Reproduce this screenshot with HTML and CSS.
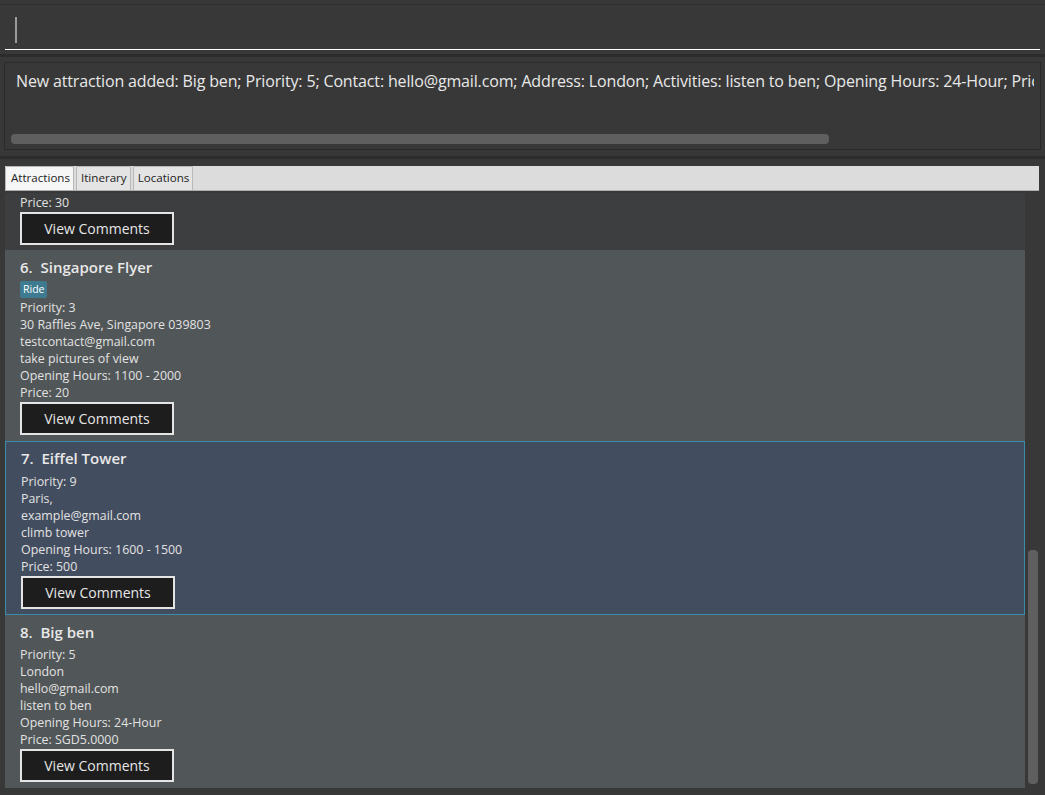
FILE: index.html
```html
<!DOCTYPE html>
<html>
<head>
<meta charset="utf-8">
<link rel="stylesheet" href="styles.css">
</head>
<body>
<div class="app">
  <div class="command-pane">
    <div class="command-box">
      <span class="caret"></span>
    </div>
  </div>
  <div class="result-pane">
    <div class="result-box">
      <div class="result-text">New attraction added: Big ben; Priority: 5; Contact: hello@gmail.com; Address: London; Activities: listen to ben; Opening Hours: 24-Hour; Price: SGD5.0000</div>
      <div class="hscroll"><div class="hthumb"></div></div>
    </div>
  </div>
  <div class="tab-pane">
    <div class="tab-header">
      <div class="tab active">Attractions</div>
      <div class="tab">Itinerary</div>
      <div class="tab">Locations</div>
    </div>
    <div class="list-wrap">
      <div class="list">
        <div class="card even partial">
          <div class="line">Price: 30</div>
          <button class="btn">View Comments</button>
        </div>
        <div class="card odd">
          <div class="title">6.&nbsp; Singapore Flyer</div>
          <div class="tags"><span class="tag">Ride</span></div>
          <div class="line">Priority: 3</div>
          <div class="line">30 Raffles Ave, Singapore 039803</div>
          <div class="line">testcontact@gmail.com</div>
          <div class="line">take pictures of view</div>
          <div class="line">Opening Hours: 1100 - 2000</div>
          <div class="line">Price: 20</div>
          <button class="btn">View Comments</button>
        </div>
        <div class="card selected">
          <div class="title">7.&nbsp; Eiffel Tower</div>
          <div class="line">Priority: 9</div>
          <div class="line">Paris,</div>
          <div class="line">example@gmail.com</div>
          <div class="line">climb tower</div>
          <div class="line">Opening Hours: 1600 - 1500</div>
          <div class="line">Price: 500</div>
          <button class="btn">View Comments</button>
        </div>
        <div class="card odd">
          <div class="title">8.&nbsp; Big ben</div>
          <div class="line">Priority: 5</div>
          <div class="line">London</div>
          <div class="line">hello@gmail.com</div>
          <div class="line">listen to ben</div>
          <div class="line">Opening Hours: 24-Hour</div>
          <div class="line">Price: SGD5.0000</div>
          <button class="btn">View Comments</button>
        </div>
      </div>
      <div class="vscroll"><div class="vthumb"></div></div>
    </div>
  </div>
</div>
</body>
</html>
```

FILE: styles.css
```css
* { box-sizing: border-box; }
html, body {
  margin: 0;
  padding: 0;
  background: #383838;
  width: 1045px;
  height: 795px;
  overflow: hidden;
  font-family: "Open Sans", "Noto Sans", sans-serif;
  color: #e6e6e6;
}
.app {
  display: flex;
  flex-direction: column;
  height: 795px;
}
.command-pane {
  padding-top: 4px;
}
.command-box {
  border-top: 1px solid #2e2e2e;
  height: 46px;
  padding: 12px 0 0 15px;
  position: relative;
}
.command-box::after {
  content: "";
  position: absolute;
  left: 5px;
  right: 5px;
  top: 44px;
  height: 1px;
  background: #ffffff;
}
.caret {
  display: block;
  width: 2px;
  height: 26px;
  background: #9a9a9a;
}
.result-pane {
  margin-top: 4px;
  border-top: 3px solid #2c2c2c;
  padding: 5px 4px 6px 4px;
}
.result-box {
  height: 88px;
  border: 1px solid #2a2a2a;
  padding: 6px 6px 0 11px;
  overflow: hidden;
}
.result-text {
  white-space: nowrap;
  font-size: 16px;
  letter-spacing: -0.15px;
  line-height: 24px;
  color: #e8e8e8;
  overflow: hidden;
}
.hscroll {
  margin-top: 41px;
  margin-left: -5px;
  height: 10px;
}
.hthumb {
  width: 818px;
  height: 10px;
  border-radius: 4px;
  background: #5f5f5f;
}
.tab-pane {
  border-top: 3px solid #2c2c2c;
  padding: 7px 6px 7px 5px;
  flex: 1;
  display: flex;
  flex-direction: column;
  min-height: 0;
}
.tab-header {
  height: 25px;
  background: #dcdcdc;
  border-bottom: 1px solid #b0b0b0;
  display: flex;
  gap: 2px;
  padding-top: 1px;
  align-items: flex-end;
}
.tab {
  font-size: 11.6px;
  color: #222;
  height: 24px;
  line-height: 22px;
  padding: 0 3px 0 4px;
  background: #e4e4e4;
  border: 1px solid #b8b8b8;
  border-bottom: 0;
  border-radius: 2px 2px 0 0;
}
.tab.active {
  background: #f6f6f6;
  padding: 0 3px 0 5px;
}
.list-wrap {
  flex: 1;
  display: flex;
  min-height: 0;
  margin-top: 2px;
}
.list {
  flex: 1;
  display: flex;
  flex-direction: column;
  overflow: hidden;
}
.card {
  padding: 8px 15px 6px 15px;
}
.card.even { background: #3c3e40; }
.card.odd { background: #515658; }
.card.selected {
  background: #424d5f;
  border: 1px solid #3a8ca8;
  padding: 7px 15px 5px 15px;
}
.card.partial {
  height: 62px;
  display: flex;
  flex-direction: column;
  justify-content: flex-end;
  padding-top: 0;
  padding-bottom: 5px;
}
.title {
  font-size: 15px;
  font-weight: 600;
  line-height: 18px;
  color: #e8e8e8;
  margin-bottom: 5px;
}
.selected .title {
  margin-bottom: 6px;
}
.tags {
  display: flex;
  height: 18px;
  align-items: flex-start;
}
.tag {
  background: #3e7b91;
  color: #ffffff;
  font-size: 10.5px;
  line-height: 16px;
  height: 17px;
  padding: 0 3px;
  border-radius: 2px;
}
.line {
  font-size: 12.4px;
  line-height: 17px;
  color: #e2e2e2;
  white-space: nowrap;
}
.btn {
  display: block;
  margin-top: 1px;
  width: 154px;
  height: 33px;
  background: #1d1d1d;
  border: 2px solid #e4e4e4;
  color: #e6e6e6;
  font-family: "Open Sans", "Noto Sans", sans-serif;
  font-size: 14px;
  padding: 0;
}
.vscroll {
  width: 14px;
  position: relative;
}
.vthumb {
  position: absolute;
  left: 3px;
  width: 10px;
  top: 357px;
  height: 234px;
  border-radius: 4px;
  background: #5f5f5f;
}
```
